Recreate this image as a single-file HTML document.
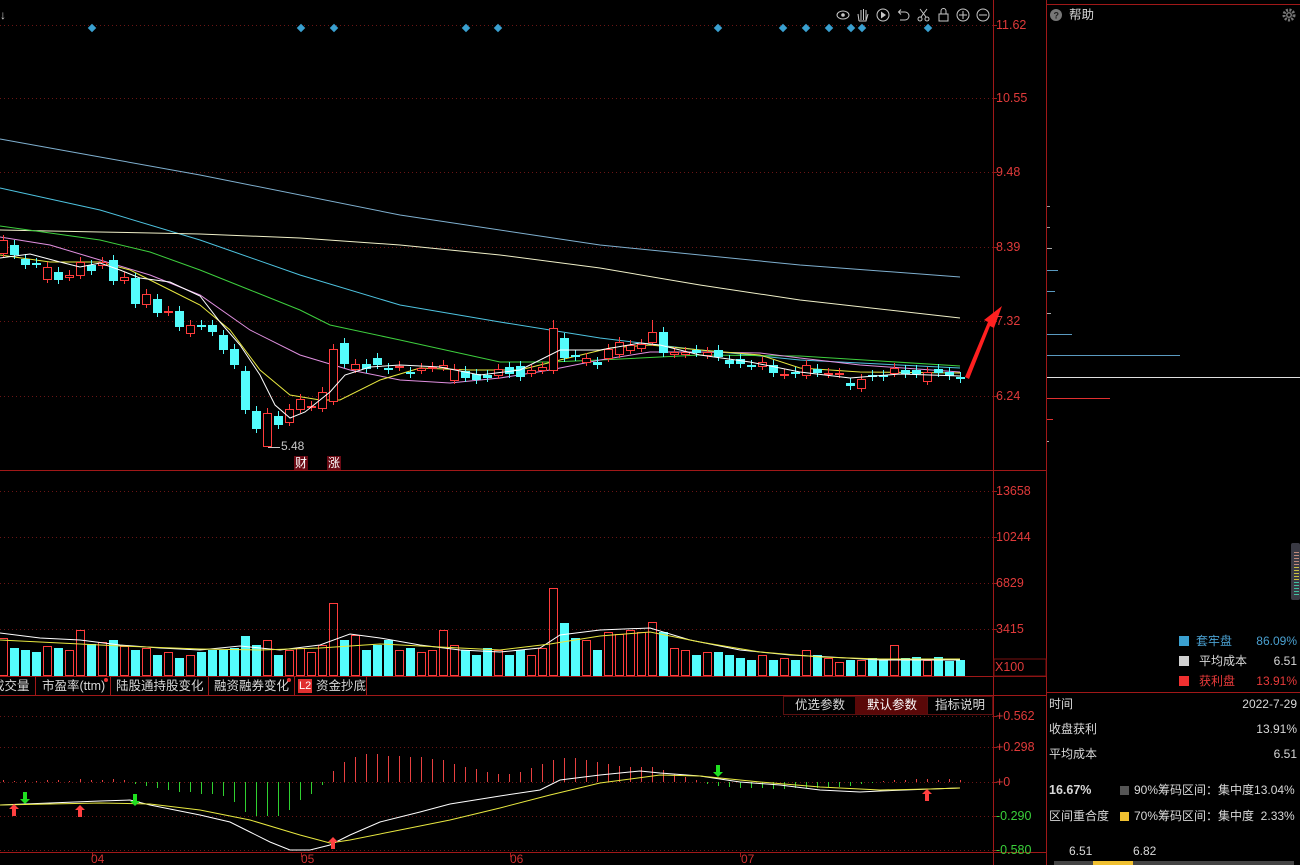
<!DOCTYPE html>
<html><head><meta charset="utf-8">
<style>
html,body{margin:0;padding:0;background:#000;width:1300px;height:865px;overflow:hidden;font-family:"Liberation Sans","Noto Sans CJK SC",sans-serif;}
#root{position:relative;width:1300px;height:865px;}
svg{position:absolute;left:0;top:0;}
.t{position:absolute;white-space:nowrap;font-size:12px;line-height:14px;}
.ax{color:#e03a3a;font-size:12.5px;left:996px;}
.axg{color:#3ad03a;font-size:12.5px;left:996px;}
.w{color:#d8d8d8;}
</style></head><body><div id="root">
<svg id="s" width="1300" height="865" xmlns="http://www.w3.org/2000/svg"></svg>

<div class="t ax" style="top:18px">11.62</div>
<div class="t ax" style="top:91px">10.55</div>
<div class="t ax" style="top:165px">9.48</div>
<div class="t ax" style="top:240px">8.39</div>
<div class="t ax" style="top:314px">7.32</div>
<div class="t ax" style="top:389px">6.24</div>
<div class="t ax" style="top:484px">13658</div>
<div class="t ax" style="top:530px">10244</div>
<div class="t ax" style="top:576px">6829</div>
<div class="t ax" style="top:622px">3415</div>
<div class="t ax" style="top:660px;left:995px">X100</div>
<div class="t ax" style="top:709px">+0.562</div>
<div class="t ax" style="top:740px">+0.298</div>
<div class="t ax" style="top:775px">+0</div>
<div class="t axg" style="top:809px">-0.290</div>
<div class="t axg" style="top:843px">-0.580</div>
<div class="t" style="left:0;top:8px;color:#d0d0d0;font-size:12px">↓</div>
<div class="t" style="left:281px;top:439px;color:#c8c8c8;font-size:12px">5.48</div>
<div class="t" style="left:294px;top:456px;color:#fff;background:#6a0a14;font-size:12px;padding:0 1px">财</div>
<div class="t" style="left:327px;top:456px;color:#fff;background:#6a0a14;font-size:12px;padding:0 1px">涨</div>

<div class="t w" style="left:-8px;top:679px;font-size:12.5px">成交量</div>
<div class="t w" style="left:42px;top:679px;font-size:12.5px">市盈率(ttm)</div>
<div class="t w" style="left:116px;top:679px;font-size:12.5px">陆股通持股变化</div>
<div class="t w" style="left:214px;top:679px;font-size:12.5px">融资融券变化</div>
<div class="t" style="left:298px;top:679px;font-size:11px;background:#e03030;color:#fff;padding:0 1px">L2</div>
<div class="t w" style="left:316px;top:679px;font-size:12.5px">资金抄底</div>
<div class="t w" style="left:795px;top:698px;font-size:12.5px">优选参数</div>
<div class="t w" style="left:867px;top:698px;font-size:12.5px;color:#fff">默认参数</div>
<div class="t w" style="left:935px;top:698px;font-size:12.5px">指标说明</div>

<div class="t" style="left:91px;top:852px;color:#d03030">04</div>
<div class="t" style="left:301px;top:852px;color:#d03030">05</div>
<div class="t" style="left:510px;top:852px;color:#d03030">06</div>
<div class="t" style="left:741px;top:852px;color:#d03030">07</div>

<div class="t w" style="left:1069px;top:8px;font-size:12.5px">帮助</div>
<div class="t" style="left:1196px;top:634px;color:#4aa0d0">套牢盘</div>
<div class="t" style="left:1245px;top:634px;color:#4aa0d0;width:52px;text-align:right">86.09%</div>
<div class="t w" style="left:1199px;top:654px">平均成本</div>
<div class="t w" style="left:1245px;top:654px;width:52px;text-align:right">6.51</div>
<div class="t" style="left:1199px;top:674px;color:#e83a3a">获利盘</div>
<div class="t" style="left:1245px;top:674px;color:#e83a3a;width:52px;text-align:right">13.91%</div>
<div class="t w" style="left:1049px;top:697px">时间</div>
<div class="t w" style="left:1200px;top:697px;width:97px;text-align:right">2022-7-29</div>
<div class="t w" style="left:1049px;top:722px">收盘获利</div>
<div class="t w" style="left:1200px;top:722px;width:97px;text-align:right">13.91%</div>
<div class="t w" style="left:1049px;top:747px">平均成本</div>
<div class="t w" style="left:1200px;top:747px;width:97px;text-align:right">6.51</div>
<div class="t w" style="left:1049px;top:783px;font-weight:bold;font-size:12.5px">16.67%</div>
<div class="t w" style="left:1134px;top:783px">90%筹码区间：集中度13.04%</div>
<div class="t w" style="left:1049px;top:809px">区间重合度</div>
<div class="t w" style="left:1134px;top:809px">70%筹码区间：集中度&nbsp;&nbsp;2.33%</div>
<div class="t w" style="left:1069px;top:844px">6.51</div>
<div class="t w" style="left:1133px;top:844px">6.82</div>
</div>
<script>
const S=document.getElementById('s');const NS='http://www.w3.org/2000/svg';
function el(t,a){const e=document.createElementNS(NS,t);for(const k in a)e.setAttribute(k,a[k]);S.appendChild(e);return e;}
function line(x1,y1,x2,y2,c,w,d){const o={x1,y1,x2,y2,stroke:c,'stroke-width':w||1};if(d)o['stroke-dasharray']=d;return el('line',o);}
function poly(pts,c,w){el('polyline',{points:pts.map(p=>p.join(',')).join(' '),fill:'none',stroke:c,'stroke-width':w||1});}
const R='#a01818';
line(993.5,0,993.5,865,R);line(1046.5,0,1046.5,865,R);
line(0,470.5,1046,470.5,R);line(0,676.5,1046,676.5,R);line(0,695.5,1046,695.5,R);line(0,852.5,1046,852.5,R);
line(1046,4.5,1300,4.5,R);line(1046,692.5,1300,692.5,R);
[25,98,172,247,321,396].forEach(y=>line(0,y+.5,993,y+.5,'#6a1515',1,'1,3'));
[491,537,583,629].forEach(y=>line(0,y+.5,993,y+.5,'#6a1515',1,'1,3'));
[716,747,782,816,850].forEach(y=>line(0,y+.5,993,y+.5,'#6a1515',1,'1,3'));
[25,98,172,247,321,396,491,537,583,629,716,747,782,816,850].forEach(y=>line(993,y+.5,997,y+.5,R));
[35,110,208,294,366].forEach(x=>line(x+.5,677,x+.5,695,R));
el('rect',{x:783.5,y:696.5,width:209,height:18,fill:'none',stroke:'#5a1010'});
el('rect',{x:855,y:697,width:72,height:17,fill:'#5a0808'});
line(927.5,697,927.5,714,'#5a1010');
el('circle',{cx:106,cy:680,r:2,fill:'#f03030'});el('circle',{cx:289,cy:680,r:2,fill:'#f03030'});
[92,301,334,466,498,718,783,806,829,851,862,928].forEach(x=>el('rect',{x:x-3,y:25,width:6,height:6,fill:'#3aa0d0',transform:`rotate(45 ${x} 28)`}));
poly([[0,139],[100,157],[200,175],[400,215],[600,245],[800,265],[960,277]],'#7fb0d0');
poly([[0,188],[100,210],[200,240],[300,275],[400,305],[500,322],[600,338],[700,350],[800,360],[960,368]],'#4ec3e0');
poly([[0,230],[100,232],[200,234],[300,238],[400,245],[500,255],[600,268],[700,285],[800,300],[960,318]],'#f0f0c8');
poly([[0,226],[50,233],[100,240],[150,252],[200,270],[250,290],[300,310],[330,325],[400,340],[500,362],[550,362],[600,360],[700,355],[800,356],[960,366]],'#3ecf3e');
poly([[0,237],[50,245],[100,260],[150,275],[200,295],[250,330],[300,355],[350,370],[400,380],[450,383],[500,378],[550,370],[600,360],[650,352],[700,352],[760,353],[800,358],[860,365],[960,372]],'#e090e0');
poly([[0,255],[50,262],[100,262],[130,270],[160,285],[200,305],[230,330],[260,370],[290,395],[320,400],[340,400],[380,380],[420,368],[470,370],[520,370],[560,360],[610,348],[650,345],[700,350],[760,355],[800,368],[860,372],[960,373]],'#e8e840');
const C=[['r',240,253],['c',245,255],['c',259,265],['c',263,264],['r',267,279],['c',272,280],['r',275,277],['r',262,275],['c',265,271],['r',262,265],['c',260,281],['r',277,280],['c',278,304],['r',294,304],['c',299,313],['r',311,312],['c',311,327],['r',325,333],['c',325,326],['c',325,332],['c',335,350],['c',349,365],['c',371,410],['c',411,429],['r',413,446],['c',416,425],['r',409,422],['r',399,409],['r',406,407],['r',392,408],['r',349,401],['c',343,364],['r',364,369],['c',364,369],['c',358,365],['c',368,370],['r',366,367],['c',372,374],['r',368,370],['r',367,368],['r',365,367],['r',369,380],['c',371,378],['c',374,380],['c',375,378],['r',369,375],['c',367,374],['c',366,377],['r',370,373],['r',367,370],['r',328,370],['c',338,358],['c',355,357],['r',358,362],['c',362,365],['r',349,358],['r',342,354],['r',345,350],['r',344,348],['r',332,342],['c',332,353],['r',352,354],['r',352,354],['c',350,353],['r',352,355],['c',350,357],['c',360,364],['c',359,364],['c',365,366],['r',362,366],['c',365,373],['r',374,375],['c',372,374],['r',365,375],['c',369,373],['r',373,374],['r',373,374],['c',383,386],['r',379,388],['c',375,377],['c',375,377],['r',368,373],['c',370,374],['c',370,374],['r',372,381],['c',369,373],['c',372,376],['c',377,379]];
const CY='#54fcfc',RD='#ff3c3c';
C.forEach((c,i)=>{const x=3+i*11;const col=c[0]=='r'?RD:CY;const lo=i==24?447:c[2]+4,hi=i==50?320:(i==59?320:c[1]-5);
line(x+.5,hi,x+.5,lo,col);
if(c[0]=='r')el('rect',{x:x-3.5,y:c[1]+.5,width:8,height:Math.max(1,c[2]-c[1]),fill:'#000',stroke:col});
else el('rect',{x:x-4,y:c[1],width:9,height:Math.max(2,c[2]-c[1]),fill:col});});
poly([[0,258],[30,254],[60,262],[80,267],[100,263],[120,270],[140,278],[170,282],[200,296],[220,322],[240,345],[260,375],[275,405],[290,418],[305,412],[330,392],[345,375],[370,367],[400,365],[440,367],[480,375],[520,370],[560,350],[600,350],[640,343],[660,345],[700,355],[750,362],[800,372],[850,378],[900,374],[960,376]],'#ffffff');
line(268,447.5,280,447.5,'#c8c8c8');
el('polygon',{points:'965,377 969,379 990,326 994,328 1002,306 984,320 988,322',fill:'#ff2020'});
const V=[638,648,650,652,646,648,650,630,644,642,640,646,650,648,655,652,658,655,652,650,650,648,636,645,640,655,650,648,652,645,603,640,635,650,645,640,650,648,652,650,630,645,650,655,648,650,655,650,655,648,588,623,638,640,650,632,634,630,632,622,632,648,650,655,652,652,655,658,660,655,660,658,660,650,655,658,662,660,660,658,660,645,658,657,660,657,661,660];
V.forEach((v,i)=>{const x=3+i*11;const r=C[i][0]=='r';
if(r)el('rect',{x:x-3.5,y:v+.5,width:8,height:676-v-1,fill:'none',stroke:RD});else el('rect',{x:x-4,y:v,width:9,height:676-v,fill:CY});});
poly([[0,633],[40,638],[80,640],[120,645],[160,648],[200,650],[240,646],[280,650],[320,645],[350,634],[380,638],[420,645],[460,650],[500,652],[540,648],[560,635],[600,630],[650,628],[690,640],[740,650],[790,655],[830,657],[880,660],[960,660]],'#ffffff');
poly([[0,640],[60,643],[120,646],[200,649],[260,650],[320,648],[380,644],[440,647],[500,650],[550,644],[600,636],[650,632],[700,642],[760,652],[820,657],[880,659],[960,659]],'#e8e840');
el('rect',{x:994,y:659,width:52,height:17,fill:'none',stroke:'#7a1010'});
const H=[2,1,2,1,2,2,1,3,2,2,3,2,-2,-4,-6,-8,-10,-10,-12,-12,-14,-20,-30,-34,-34,-34,-28,-18,-12,-3,11,20,25,28,28,26,26,25,25,23,22,18,15,13,10,8,8,10,14,18,22,24,24,22,20,18,16,15,15,15,12,8,5,2,-2,-4,-5,-6,-6,-6,-7,-7,-6,-6,-6,-5,-5,-4,-2,-1,1,2,2,3,3,2,3,2];
H.forEach((h,i)=>{const x=3+i*11+.5;line(x,782,x,782-h,h>=0?'#e84040':'#30d030');});
poly([[0,805],[50,803],[100,801],[130,800],[150,805],[200,815],[230,822],[250,832],[270,842],[290,850],[310,850],[330,845],[350,835],[380,822],[420,812],[450,804],[500,796],[540,790],[560,780],[600,775],[640,771],[660,773],[700,776],[740,782],[780,785],[820,790],[860,792],[880,791],[930,789],[960,788]],'#ffffff');
poly([[0,805],[100,803],[150,804],[200,810],[250,820],[300,835],[330,843],[350,840],[400,830],[450,820],[500,808],[550,795],[600,783],[660,775],[700,776],[760,782],[820,787],[880,790],[930,789],[960,788]],'#e8e840');
function up(x,y){el('polygon',{points:`${x},${y-7} ${x+5},${y-2} ${x+2},${y-2} ${x+2},${y+5} ${x-2},${y+5} ${x-2},${y-2} ${x-5},${y-2}`,fill:'#ff4040'});}
function dn(x,y){el('polygon',{points:`${x},${y+7} ${x+5},${y+2} ${x+2},${y+2} ${x+2},${y-5} ${x-2},${y-5} ${x-2},${y+2} ${x-5},${y+2}`,fill:'#20e020'});}
up(14,811);up(80,812);up(333,844);up(927,796);dn(25,797);dn(135,799);dn(718,770);
[92,301,510,740].forEach(x=>line(x+.5,852,x+.5,857,R));
const G='#c8c8c8';
el('ellipse',{cx:843,cy:15,rx:6,ry:4,fill:'none',stroke:G});el('circle',{cx:843,cy:15,r:1.8,fill:G});
el('path',{d:'M859,21 L858,14 M859,21 h7 l2,-7 M861,20 v-10 M863.5,20 v-11 M866,20 v-10',fill:'none',stroke:G});
el('circle',{cx:883,cy:15,r:6,fill:'none',stroke:G});el('polygon',{points:'881,11.5 881,18.5 886,15',fill:G});
el('path',{d:'M899,12 h6 a4,4 0 0 1 0,8 h-5 M901,9.5 l-2.5,2.5 2.5,2.5',fill:'none',stroke:G});
el('circle',{cx:920,cy:19,r:2,fill:'none',stroke:G});el('circle',{cx:927,cy:19,r:2,fill:'none',stroke:G});el('path',{d:'M921,17 L927,9 M926,17 L920,9',stroke:G,fill:'none'});
el('rect',{x:939,y:14,width:9,height:7,fill:'none',stroke:G});el('path',{d:'M941,14 v-3 a2.5,2.5 0 0 1 5,0 v3',fill:'none',stroke:G});
el('circle',{cx:963,cy:15,r:6,fill:'none',stroke:G});line(959,15,967,15,G);line(963,11,963,19,G);
el('circle',{cx:983,cy:15,r:6,fill:'none',stroke:G});line(979,15,987,15,G);
el('circle',{cx:1056,cy:15,r:6,fill:'#777'});el('text',{x:1053.5,y:18.5,fill:'#222','font-size':9,'font-weight':'bold','font-family':'Liberation Sans'}).textContent='?';
el('circle',{cx:1289,cy:15,r:5,fill:'none',stroke:'#777','stroke-width':3,'stroke-dasharray':'2,1.4'});el('circle',{cx:1289,cy:15,r:3,fill:'#777'});el('circle',{cx:1289,cy:15,r:1.5,fill:'#000'});
[[206,1050,'#999'],[227,1050,'#999'],[248,1052,'#aaa'],[270,1058,'#5a9ac0'],[291,1055,'#5a9ac0'],[313,1051,'#aaa'],[334,1072,'#5a9ac0'],[355,1180,'#5a9ac0'],[398,1110,'#e03030'],[419,1053,'#e03030'],[441,1049,'#aaa']].forEach(a=>line(1047,a[0]+.5,a[1],a[0]+.5,a[2]));
line(1047,377.5,1300,377.5,'#e0e0e0');
el('rect',{x:1291,y:543,width:9,height:57,rx:2,fill:'#3a3a44'});
for(let y=552;y<596;y+=3)line(1294,y+.5,1299,y+.5,y<565?'#c08a7a':(y<580?'#c8c040':'#40c0a0'));
el('rect',{x:1179,y:636,width:10,height:10,fill:'#3aa0d0'});
el('rect',{x:1179,y:656,width:10,height:10,fill:'#d0d0d0'});
el('rect',{x:1179,y:676,width:10,height:10,fill:'#f03030'});
el('rect',{x:1120,y:786,width:9,height:9,fill:'#555'});
el('rect',{x:1120,y:812,width:9,height:9,fill:'#f0c030'});
el('rect',{x:1054,y:861,width:240,height:4,fill:'#444'});
el('rect',{x:1093,y:861,width:40,height:4,fill:'#f0c030'});
</script>
</body></html>
